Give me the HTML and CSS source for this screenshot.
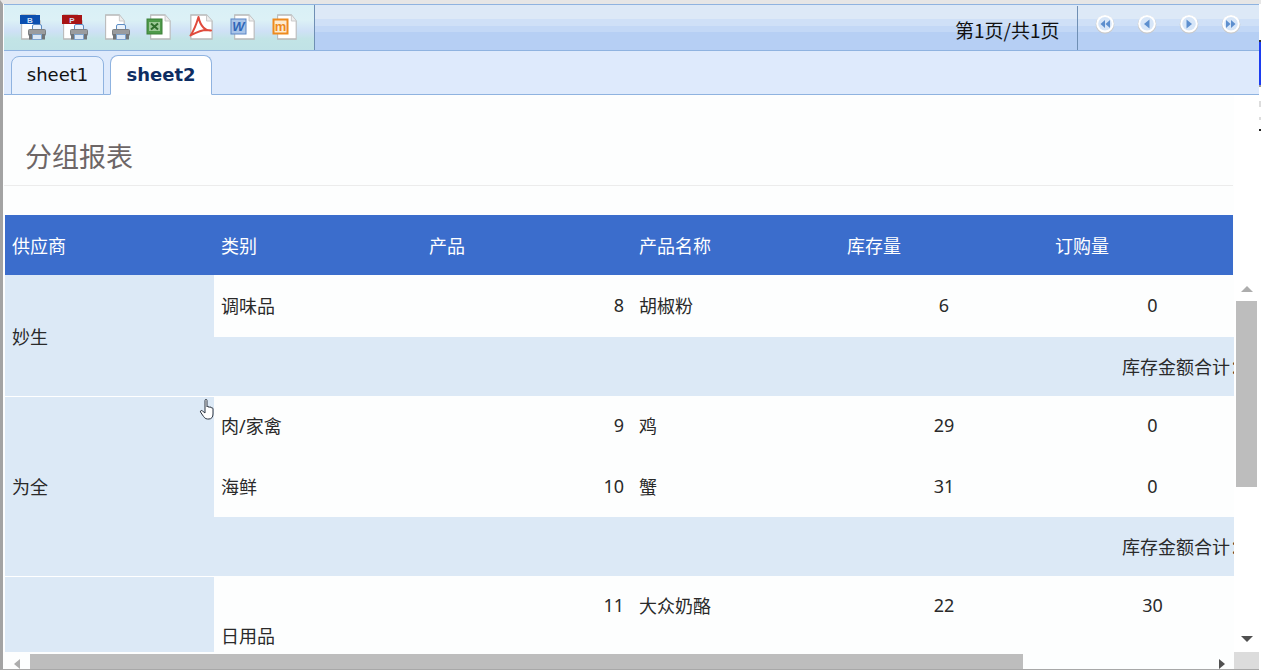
FILE: index.html
```html
<!DOCTYPE html>
<html lang="zh">
<head>
<meta charset="utf-8">
<title>分组报表</title>
<link rel="stylesheet" href="styles.css">
</head>
<body>
<svg class="defs" width="0" height="0" aria-hidden="true">
  <symbol id="page" viewBox="0 0 26 26" preserveAspectRatio="none">
    <path d="M2 1H19L25 7V25H2Z" fill="#fff" stroke="#b8b8b8" stroke-width="1.300"/>
    <path d="M19 1V7H25" fill="#eee" stroke="#c4c4c4"/>
  </symbol>
  <symbol id="printer" viewBox="0 0 18 16">
    <rect x="4.500" y="0.500" width="9" height="6" rx="1.500" fill="#eaf2fb" stroke="#5c8cc4"/>
    <rect x="0.500" y="5.500" width="17" height="6" rx="1" fill="#9a9c9f" stroke="#7d8083"/>
    <rect x="1" y="10" width="16" height="5.500" fill="#707478"/>
    <rect x="4.500" y="10.500" width="9" height="5" fill="#dbe8f6" stroke="#7ea4cf"/>
  </symbol>
  <symbol id="nav" viewBox="0 0 20 20">
    <circle cx="10" cy="10.500" r="9.300" fill="#c9c9c9"/>
    <circle cx="10" cy="9.800" r="8.800" fill="#fff"/>
    <circle cx="10" cy="9.800" r="6.800" fill="#d7e6f8"/>
  </symbol>
</svg>

<div class="frame">
  <header class="toolbar">
    <div class="tools">
      <svg class="tool" viewBox="0 0 26 26"><use href="#page" x="0" y="0" width="21" height="26"/><rect x="0" y="1" width="20" height="9" fill="#0b4fb0"/><text x="10" y="8.500" class="ltr">B</text><use href="#printer" x="8" y="10" width="18" height="16"/></svg>
      <svg class="tool" viewBox="0 0 26 26"><use href="#page" x="0" y="0" width="21" height="26"/><rect x="0" y="1" width="20" height="9" fill="#a81414"/><text x="10" y="8.500" class="ltr">P</text><use href="#printer" x="8" y="10" width="18" height="16"/></svg>
      <svg class="tool" viewBox="0 0 26 26"><use href="#page" x="0" y="0" width="21" height="26"/><use href="#printer" x="8" y="10" width="18" height="16"/></svg>
      <svg class="tool" viewBox="0 0 26 26"><use href="#page" x="3" y="0" width="22" height="26"/><rect x="1" y="5" width="15" height="15" fill="#4f9a4a" stroke="#3c8038"/><rect x="3" y="8" width="11" height="9" fill="#9cc896"/><path d="M5 9.500L12 15.500M12 9.500L5 15.500" stroke="#2f6d2c" stroke-width="2"/></svg>
      <svg class="tool" viewBox="0 0 26 26"><use href="#page" x="1" y="0" width="24" height="26"/><path d="M10.500 3C9 8 7 15 2.500 21.500C7 19 15 14 23 16.500C18 17 12.500 13 10.500 3Z" fill="none" stroke="#e04a3c" stroke-width="2" stroke-linejoin="round"/></svg>
      <svg class="tool" viewBox="0 0 26 26"><use href="#page" x="3" y="0" width="22" height="26"/><rect x="1" y="5" width="15" height="15" fill="#a9c4e8" stroke="#5b86c6"/><text x="8.500" y="17" class="wd">W</text></svg>
      <svg class="tool" viewBox="0 0 26 26"><use href="#page" x="4" y="0" width="21" height="26"/><rect x="1.500" y="5.500" width="14" height="14" fill="#fdebd0" stroke="#ee8a1e" stroke-width="2"/><text x="8.500" y="16.500" class="md">m</text></svg>
    </div>
    <div class="pager">
      <span class="pageinfo">第1页/共1页</span>
      <nav class="navs">
        <svg class="navbtn" viewBox="0 0 20 20"><use href="#nav" width="20" height="20"/><path d="M10 6V14L5.500 10ZM15 6V14L10.500 10Z" fill="#5d8fce"/></svg>
        <svg class="navbtn" viewBox="0 0 20 20"><use href="#nav" width="20" height="20"/><path d="M12.500 5.500V14.500L7 10Z" fill="#5d8fce"/></svg>
        <svg class="navbtn" viewBox="0 0 20 20"><use href="#nav" width="20" height="20"/><path d="M7.500 5.500V14.500L13 10Z" fill="#5d8fce"/></svg>
        <svg class="navbtn" viewBox="0 0 20 20"><use href="#nav" width="20" height="20"/><path d="M5 6V14L9.500 10ZM10 6V14L14.500 10Z" fill="#5d8fce"/></svg>
      </nav>
    </div>
  </header>

  <div class="tabs">
    <span class="tab">sheet1</span>
    <span class="tab tab-active">sheet2</span>
  </div>

  <main class="report">
    <div class="sheet">
      <h1 class="title">分组报表</h1>
      <div class="head-clip">
        <table class="grid grid-head">
          <colgroup><col class="c1"><col class="c2"><col class="c3"><col class="c4"><col class="c5"><col class="c6"></colgroup>
          <tr><th>供应商</th><th>类别</th><th>产品</th><th>产品名称</th><th>库存量</th><th>订购量</th></tr>
        </table>
      </div>
      <div class="body-clip">
        <table class="grid">
          <colgroup><col class="c1"><col class="c2"><col class="c3"><col class="c4"><col class="c5"><col class="c6"></colgroup>
          <tr class="r62"><td rowspan="2" class="group low">妙生</td><td>调味品</td><td class="num">8</td><td>胡椒粉</td><td class="mid">6</td><td class="mid">0</td></tr>
          <tr class="sum r59"><td colspan="5"><span class="sumtext">库存金额合计：</span></td></tr>
          <tr class="r61"><td rowspan="3" class="group sep">为全</td><td>肉/家禽</td><td class="num">9</td><td>鸡</td><td class="mid">29</td><td class="mid">0</td></tr>
          <tr class="r60"><td>海鲜</td><td class="num">10</td><td>蟹</td><td class="mid">31</td><td class="mid">0</td></tr>
          <tr class="sum r59"><td colspan="5"><span class="sumtext">库存金额合计：</span></td></tr>
          <tr class="r61"><td rowspan="2" class="group sep"></td><td rowspan="2" class="raised">日用品</td><td class="num">11</td><td>大众奶酪</td><td class="mid">22</td><td class="mid">30</td></tr>
          <tr class="r60"><td></td><td></td><td></td><td></td></tr>
        </table>
      </div>
    </div>
    <div class="vbar">
      <span class="arrow up"></span>
      <div class="vtrack"><div class="vthumb"></div></div>
      <span class="arrow down"></span>
    </div>
  </main>

  <div class="hbar">
    <div class="hrail">
      <span class="arrow left"></span>
      <div class="hthumb"></div>
      <span class="arrow right"></span>
    </div>
    <div class="corner"></div>
  </div>
</div>

<div class="edge"></div>

<svg class="cursor" width="18" height="24" viewBox="0 0 18 24" aria-hidden="true"><path d="M6 2.500C6 1 8 1 8 2.500V9C8.500 8 10 8 10 9.500C10.500 8.500 12 8.500 12 10C12.500 9.500 14 9.500 14 11V16C14 19 12.500 21 10 21H8.500C6 21 5 19 3.500 17L1.500 14C1 12.500 2.500 12 3.500 13L6 15Z" fill="#fff" stroke="#2c3440" stroke-width="1"/></svg>
</body>
</html>
```
FILE: styles.css
```css
* { box-sizing: border-box; }
html, body { margin: 0; height: 100%; overflow: hidden; background: #fff; }
body { font-family: "Noto Sans", "Noto Sans CJK SC", sans-serif; color: #222; position: relative; }
.defs { position: absolute; }

.frame {
  width: 1259px; height: 670px;
  display: flex; flex-direction: column;
  border-top: 4px solid #e6e6e6;
  border-left: 3px solid #a3a3a3;
  border-bottom: 1px solid #a8a8a8;
  background: #fdfefe;
}

.toolbar {
  height: 47px; flex: none;
  display: flex;
  margin-left: 1px;
  border-top: 1px solid #8fb3e0;
  border-bottom: 1px solid #8fb3e0;
  background: linear-gradient(#dde9f7 0 14px, #cfe0f7 14px 21px, #c3d8f6 21px 27px, #b6cff4 27px);
}
.tools {
  width: 311px; flex: none;
  display: flex; align-items: flex-start;
  padding: 9px 0 0 16px;
  gap: 16px;
  border-right: 1px solid #6f8fb4;
  background: linear-gradient(#d9f0f6 0, #dcf1f6 15px, #cfe1f6 26px, #c2e4e6 34px, #c0e2e6 100%);
}
.tool { width: 26px; height: 26px; flex: none; display: block; }
.ltr { font: bold 8px "Liberation Sans", sans-serif; fill: #cfe0f8; text-anchor: middle; }
.wd { font: bold italic 13px "Liberation Sans", sans-serif; fill: #2f66b8; text-anchor: middle; }
.md { font: bold 13px "Liberation Sans", sans-serif; fill: #ee8a1e; text-anchor: middle; }

.pager { flex: 1; display: flex; border-top: 1px solid transparent; }
.pageinfo {
  margin-left: auto; width: 123px; flex: none;
  font: 19px/32px "Noto Sans CJK SC", sans-serif;
  color: #111; white-space: nowrap; padding-top: 8px;
  border-right: 1px solid #6f8fb4;
}
.navs { width: 181px; flex: none; display: flex; gap: 22px; padding: 8px 0 0 17px; }
.navbtn { width: 20px; height: 20px; flex: none; display: block; }

.tabs {
  height: 44px; flex: none;
  margin-left: 1px;
  display: flex; align-items: flex-end; gap: 6px;
  padding-left: 7px;
  background: #deeafc;
  border-bottom: 1px solid #8fb3e0;
}
.tab {
  width: 93px; height: 39px;
  margin-bottom: -1px;
  padding-bottom: 2px;
  display: flex; align-items: center; justify-content: center;
  font: 18px "DejaVu Sans", sans-serif;
  color: #111;
  background: #e8f1fd;
  border: 1px solid #8fb3e0;
  border-radius: 8px 8px 0 0;
}
.tab-active {
  width: 102px; height: 40px;
  font-weight: bold; color: #0e2d62;
  background: #fff;
  border-bottom-color: #fff;
}

.report { flex: 1; min-height: 0; display: flex; margin-left: 1px; }
.sheet { width: 1230px; flex: none; display: flex; flex-direction: column; min-height: 0; overflow: hidden; }
.title {
  margin: 0 1px 0 0; height: 91px; padding: 39px 0 0 21px;
  font: 400 27px/44px "Noto Sans CJK SC", sans-serif;
  color: #6d6666;
  border-bottom: 1px solid #ececec;
  flex: none;
}
.head-clip { margin: 29px 1px 0 0; overflow: hidden; flex: none; }
.grid {
  table-layout: fixed; border-collapse: collapse;
  width: 1252px;
  margin-left: 1px;
  font-size: 18px;
}
.grid-head { background: #3b6dcc; }
.c1 { width: 209px; } .c2 { width: 208px; } .c3 { width: 210px; }
.c4 { width: 208px; } .c5 { width: 208px; } .c6 { width: 209px; }
.grid th {
  height: 60px; padding: 0 7px; color: #fff;
  font-weight: 400; text-align: left;
}
.grid td { padding: 0 7px 2px; white-space: nowrap; overflow: hidden; color: #2a2a2a; }
.grid .r61 td { padding-bottom: 4px; }
.grid td.group { padding-bottom: 0; }
.grid td.low { padding-top: 2px; }
.grid .r61 td.raised { padding-bottom: 4px; }
.body-clip { flex: 1; min-height: 0; overflow: hidden; }
.r62 { height: 62px; } .r61 { height: 61px; } .r60 { height: 60px; } .r59 { height: 59px; }
.group { background: #dce9f6; }
.sep { border-top: 1px solid #fff; }
.num { text-align: right; padding-right: 8px !important; }
.mid { text-align: center; }
.grid .sum td { background: #dce9f6; text-align: right; padding: 0 0 2px; overflow: hidden; }
.sumtext { display: block; text-align: left; margin-left: 908px; white-space: nowrap; }

.vbar {
  width: 25px; flex: none;
  display: flex; flex-direction: column; align-items: center;
  padding: 191px 0 10px;
  background: #fff;
}
.vtrack { flex: 1; width: 21px; padding-top: 9px; }
.vthumb { height: 186px; background: #bdbdbd; }

.arrow { display: block; width: 0; height: 0; flex: none; border-style: solid; border-color: transparent; }
.up { border-width: 0 6px 6px; border-bottom-color: #adadad; }
.down { border-width: 6px 6px 0; border-top-color: #505050; }
.left { border-width: 5.500px 6px 5.500px 0; border-right-color: #adadad; margin-top: 6px; }
.right { border-width: 5.500px 0 5.500px 6px; border-left-color: #505050; margin: 6px 0 0 196px; }

.hbar { height: 17px; flex: none; display: flex; margin-left: 1px; }
.hrail { width: 1230px; flex: none; display: flex; align-items: center; padding-left: 10px; }
.hthumb { width: 993px; height: 15px; margin-left: 10px; align-self: flex-start; margin-top: 2px; background: #bdbdbd; }
.corner { width: 25px; background: #dcdcdc; }

.edge {
  position: absolute; right: 0; top: 0; width: 2px; height: 670px;
  background: linear-gradient(#e6e6e6 0 4px, #fff 4px 40px, #333 40px 42px, #1c3cf0 42px 85px, #999 85px 87px, #fff 87px 101px, #ddd 101px 107px, #fff 107px 117px, #ddd 117px 120px, #fff 120px 129px, #222 129px 131px, #fff 131px);
}
.cursor { position: absolute; left: 199px; top: 398px; }
```
